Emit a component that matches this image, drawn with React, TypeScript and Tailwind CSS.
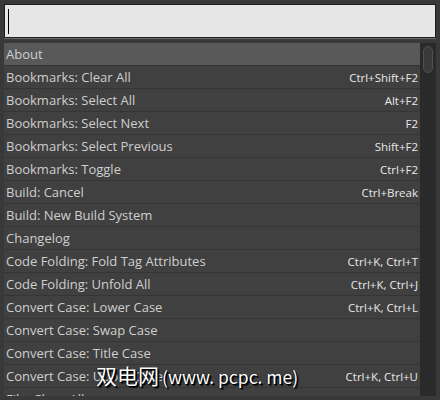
import React from 'react';

const items: [string, string][] = [
  ['About', ''],
  ['Bookmarks: Clear All', 'Ctrl+Shift+F2'],
  ['Bookmarks: Select All', 'Alt+F2'],
  ['Bookmarks: Select Next', 'F2'],
  ['Bookmarks: Select Previous', 'Shift+F2'],
  ['Bookmarks: Toggle', 'Ctrl+F2'],
  ['Build: Cancel', 'Ctrl+Break'],
  ['Build: New Build System', ''],
  ['Changelog', ''],
  ['Code Folding: Fold Tag Attributes', 'Ctrl+K, Ctrl+T'],
  ['Code Folding: Unfold All', 'Ctrl+K, Ctrl+J'],
  ['Convert Case: Lower Case', 'Ctrl+K, Ctrl+L'],
  ['Convert Case: Swap Case', ''],
  ['Convert Case: Title Case', ''],
  ['Convert Case: Upper Case', 'Ctrl+K, Ctrl+U'],
  ['File: Close All', ''],
];

export default function App() {
  return (
    <div
      className="w-[440px] h-[400px] bg-[#393939] px-1 pt-1 overflow-hidden relative"
      style={{ fontFamily: '"Open Sans", "Noto Sans", sans-serif' }}
    >
      {/* Search input */}
      <div className="h-[34px] border border-[#1e1e1e] bg-[#e6e6e6] flex items-center pl-[3px] shadow-[0_1px_0_#6a6a6a]">
        <div className="w-px h-[25px] bg-black" />
      </div>

      {/* Result list */}
      <div className="mt-[5px] h-[353px] flex">
        <div className="flex-1 overflow-hidden bg-[#404040]">
          {items.map(([label, key], i) => (
            <div
              key={label}
              className={`h-[23px] flex items-center justify-between pl-[2px] pr-[2px] pt-px border-b border-[#353535] ${
                i === 0 ? 'bg-[#595959]' : ''
              }`}
            >
              <span className="text-[13px] text-[#cfcfcf] leading-none">{label}</span>
              <span className="text-[11.5px] text-[#e8e8e8] leading-none">{key}</span>
            </div>
          ))}
        </div>
        <div className="w-4 bg-[#2a2a2a] flex justify-center pt-[3px]">
          <div className="w-[10px] h-[27px] rounded-full bg-[#3a3a3a] border border-[#505050]" />
        </div>
      </div>

      {/* Watermark */}
      <div
        className="absolute left-[96px] top-[365px] flex items-end text-white leading-none"
        style={{
          fontFamily: '"Noto Sans CJK SC", "Liberation Sans", sans-serif',
          textShadow: '1px 1px 0 #000, 2px 2px 0 #111, -1px 0 0 #222',
        }}
      >
        <span className="text-[21px]">双电网</span>
        <span className="text-[17.5px] pl-[3px] pb-[1px]">(www. pcpc. me)</span>
      </div>
    </div>
  );
}
